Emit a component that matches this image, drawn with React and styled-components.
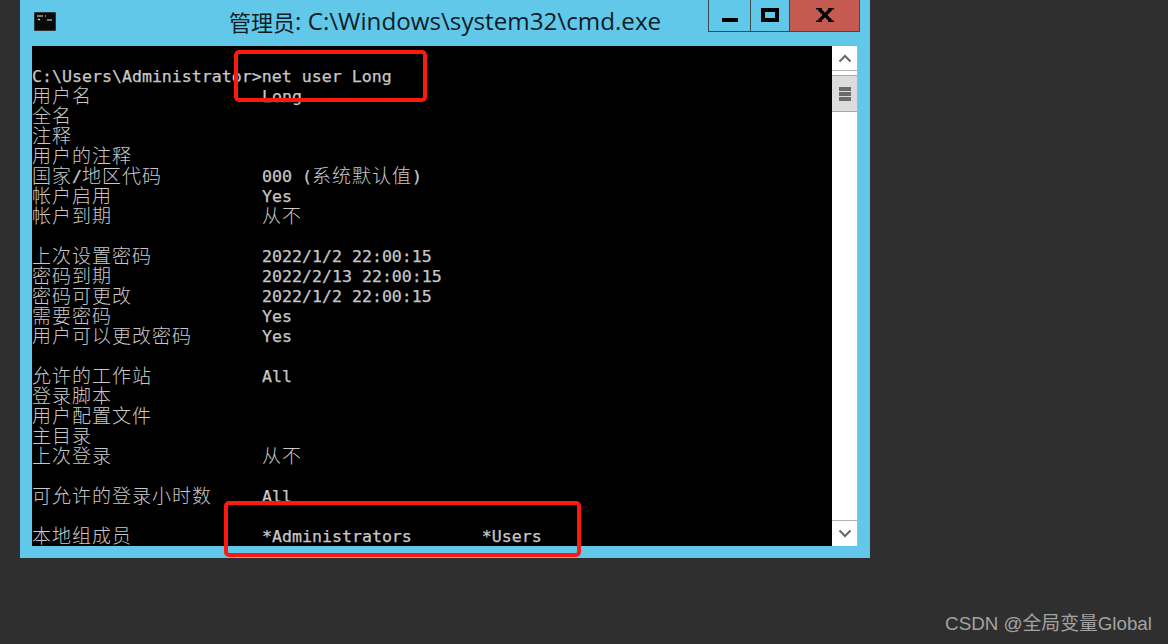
import React from 'react'
import styled, { createGlobalStyle } from 'styled-components'

const GlobalStyle = createGlobalStyle`
  html, body {
    margin: 0;
    padding: 0;
    background: #2f2f2f;
  }
`

const rows = [
  [],
  ['C:\\Users\\Administrator>net user Long'],
  ['用户名', 'Long'],
  ['全名'],
  ['注释'],
  ['用户的注释'],
  ['国家/地区代码', '000 (系统默认值)'],
  ['帐户启用', 'Yes'],
  ['帐户到期', '从不'],
  [],
  ['上次设置密码', '2022/1/2 22:00:15'],
  ['密码到期', '2022/2/13 22:00:15'],
  ['密码可更改', '2022/1/2 22:00:15'],
  ['需要密码', 'Yes'],
  ['用户可以更改密码', 'Yes'],
  [],
  ['允许的工作站', 'All'],
  ['登录脚本'],
  ['用户配置文件'],
  ['主目录'],
  ['上次登录', '从不'],
  [],
  ['可允许的登录小时数', 'All'],
  [],
  ['本地组成员', '*Administrators       *Users'],
]

const ConsoleText = ({ text }) =>
  text.split(/([\u4e00-\u9fff]+)/).map((part, i) =>
    i % 2 ? <Han key={i}>{part}</Han> : <Latin key={i}>{part}</Latin>
  )

const App = () => (
  <Page>
    <GlobalStyle />
    <Window>
      <TitleBar>
        <AppIcon>
          <svg width="22" height="19" viewBox="0 0 22 19">
            <rect width="22" height="19" fill="#0a0a0a" stroke="#8a9aa5" strokeWidth="0.6" />
            <path d="M3 4h6M11 4h1M4 7l2 1M13 8h5" stroke="#e8e8e8" strokeWidth="1.2" fill="none" />
          </svg>
        </AppIcon>
        <Title><TitleHan>管理员</TitleHan>: C:\Windows\system32\cmd.exe</Title>
        <Controls>
          <MinButton>
            <svg width="16" height="4" viewBox="0 0 16 4"><rect width="16" height="4" fill="#000" /></svg>
          </MinButton>
          <MaxButton>
            <svg width="18" height="14" viewBox="0 0 18 14">
              <rect x="2" y="2" width="14" height="10" fill="none" stroke="#000" strokeWidth="4" />
            </svg>
          </MaxButton>
          <CloseButton>
            <svg width="18" height="14" viewBox="0 0 18 14">
              <path d="M3 1l12 12M15 1L3 13" stroke="#000" strokeWidth="3.2" fill="none" />
              <path d="M0 .7h6M12 .7h6M0 13.3h6M12 13.3h6" stroke="#000" strokeWidth="1.4" fill="none" />
            </svg>
          </CloseButton>
        </Controls>
      </TitleBar>
      <Client>
        <Console>
          {rows.map((row, i) => (
            <Row key={i}>
              {row.length === 1 && row[0].startsWith('C:') ? (
                <ConsoleText text={row[0]} />
              ) : (
                <>
                  <Label><ConsoleText text={row[0] || ''} /></Label>
                  <Value><ConsoleText text={row[1] || ''} /></Value>
                </>
              )}
            </Row>
          ))}
        </Console>
        <Scrollbar>
          <ArrowButton>
            <svg width="14" height="9" viewBox="0 0 14 9">
              <path d="M1.5 7.5L7 2l5.500 5.500" stroke="#666" strokeWidth="2" fill="none" />
            </svg>
          </ArrowButton>
          <Thumb>
            <Grip /><Grip /><Grip />
          </Thumb>
          <Track />
          <ArrowButton down>
            <svg width="14" height="9" viewBox="0 0 14 9">
              <path d="M1.500 1.500L7 7l5.500-5.500" stroke="#666" strokeWidth="2" fill="none" />
            </svg>
          </ArrowButton>
        </Scrollbar>
      </Client>
    </Window>
    <Highlight x={234} y={50} w={193} h={52} />
    <Highlight x={224} y={501} w={357} h={56} />
    <Watermark>CSDN @全局变量Global</Watermark>
  </Page>
)

const Page = styled.div`
  position: relative;
  width: 1168px;
  height: 644px;
  overflow: hidden;
  background: #2f2f2f;
  padding-left: 20px;
  box-sizing: border-box;
`

const Window = styled.div`
  width: 850px;
  height: 558px;
  background: #62c8ea;
  display: flex;
  flex-direction: column;
  padding: 0 12px 12px;
  box-sizing: border-box;
`

const TitleBar = styled.div`
  height: 46px;
  flex: none;
  display: flex;
  align-items: flex-start;
`

const AppIcon = styled.div`
  margin: 12px 0 0 2px;
  height: 19px;
  line-height: 0;
`

const Title = styled.div`
  margin: 5px 0 0 173px;
  width: 434px;
  flex: none;
  font-family: "Open Sans", "Noto Sans CJK SC", sans-serif;
  font-size: 24.2px;
  line-height: 32px;
  color: #0e1c24;
  white-space: nowrap;
`

const TitleHan = styled.span`
  font-family: "Noto Sans CJK SC", sans-serif;
  font-size: 22px;
  display: inline-block;
  height: 32px;
  vertical-align: top;
`

const Controls = styled.div`
  display: flex;
  height: 32px;
  margin-left: 45px;
  border: solid #3d4a52;
  border-width: 0 1px 1px;
  box-sizing: border-box;
`

const ControlButton = styled.div`
  height: 31px;
  display: flex;
  justify-content: center;
  box-sizing: border-box;
`

const MinButton = styled(ControlButton)`
  width: 42px;
  border-right: 1px solid #3d4a52;
  align-items: flex-end;
  padding-bottom: 9px;
`

const MaxButton = styled(ControlButton)`
  width: 39px;
  border-right: 1px solid #3d4a52;
  padding-top: 8px;
`

const CloseButton = styled(ControlButton)`
  flex: 1;
  width: 69px;
  background: #c45a50;
  padding-top: 8px;
`

const Client = styled.div`
  flex: 1;
  display: flex;
  min-height: 0;
  width: 826px;
  box-shadow: 0 -1px 0 #8fb4c4;
`

const Console = styled.div`
  width: 800px;
  background: #000;
  overflow: hidden;
  color: #c8c8c8;
  font-family: "DejaVu Sans Mono", monospace;
  font-size: 16.6px;
  line-height: 22px;
`

const Row = styled.div`
  display: flex;
  height: 20px;
  white-space: pre;
`

const Label = styled.div`
  width: 230px;
  flex: none;
`

const Value = styled.div`
  flex: 1;
`

const Latin = styled.span`
  -webkit-text-stroke: 0.25px #c8c8c8;
`

const Han = styled.span`
  display: inline-block;
  height: 20px;
  vertical-align: top;
  font-family: "Noto Sans CJK SC", sans-serif;
  font-size: 19px;
  font-weight: 300;
  letter-spacing: 1px;
  line-height: 17px;
`

const Scrollbar = styled.div`
  width: 26px;
  background: #fff;
  display: flex;
  flex-direction: column;
  border-right: 1px solid #b4b4b4;
  box-sizing: border-box;
`

const ArrowButton = styled.div`
  height: ${(props) => (props.down ? '26px' : '25px')};
  flex: none;
  display: flex;
  align-items: center;
  justify-content: center;
  box-sizing: border-box;
  border-${(props) => (props.down ? 'top' : 'bottom')}: 1px solid #b4b4b4;
`

const Thumb = styled.div`
  margin-top: 4px;
  height: 37px;
  flex: none;
  background: #dcdcdc;
  border: solid #a8a8a8;
  border-width: 1px 0;
  box-sizing: border-box;
  display: flex;
  flex-direction: column;
  align-items: center;
  justify-content: center;
  gap: 1px;
`

const Grip = styled.div`
  width: 12px;
  height: 4px;
  background: #6a6a6a;
`

const Track = styled.div`
  flex: 1;
`

const Highlight = styled.div`
  position: absolute;
  left: ${(props) => props.x}px;
  top: ${(props) => props.y}px;
  width: ${(props) => props.w}px;
  height: ${(props) => props.h}px;
  border: 4px solid #fb1a10;
  border-radius: 5px;
  box-sizing: border-box;
`

const Watermark = styled.div`
  position: absolute;
  right: 16px;
  top: 612px;
  font-family: "Liberation Sans", "Noto Sans CJK SC", sans-serif;
  font-size: 18.8px;
  line-height: 24px;
  color: #a3a3a3;
  white-space: nowrap;
`

export default App
